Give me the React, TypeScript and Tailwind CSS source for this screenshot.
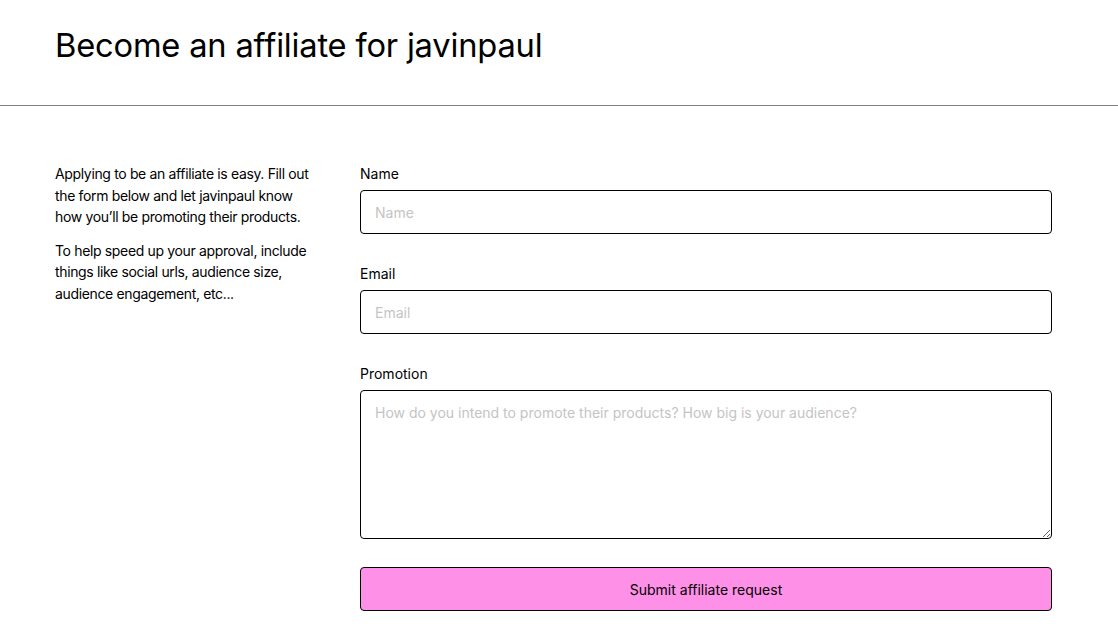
export default function App() {
  return (
    <div className="min-h-screen bg-white text-black" style={{ fontFamily: "Inter, 'Noto Sans', sans-serif" }}>
      <header className="h-[106px] border-b border-[#808080] px-[55px] flex items-center">
        <h1 className="text-[32.7px] leading-none tracking-[-0.2px] pb-[14px]">Become an affiliate for javinpaul</h1>
      </header>
      <main className="flex pl-[55px] pt-[57px]">
        <div className="w-[305px] shrink-0 text-[14px] leading-[21.5px] tracking-[-0.35px]">
          <p className="mb-[12px]">
            Applying to be an affiliate is easy. Fill out
            <br />
            the form below and let javinpaul know
            <br />
            how you’ll be promoting their products.
          </p>
          <p>
            To help speed up your approval, include
            <br />
            things like social urls, audience size,
            <br />
            audience engagement, etc...
          </p>
        </div>
        <form className="w-[692px] flex flex-col gap-[29px]" onSubmit={(e) => e.preventDefault()}>
          <div className="flex flex-col gap-[6px]">
            <label className="text-[14px] leading-[21px]">Name</label>
            <input
              placeholder="Name"
              className="h-[44px] rounded-[4px] border border-black px-[14px] text-[14px] placeholder:text-[#c4c4c4] outline-none"
            />
          </div>
          <div className="flex flex-col gap-[6px]">
            <label className="text-[14px] leading-[21px]">Email</label>
            <input
              placeholder="Email"
              className="h-[44px] rounded-[4px] border border-black px-[14px] text-[14px] placeholder:text-[#c4c4c4] outline-none"
            />
          </div>
          <div className="flex flex-col gap-[6px]">
            <label className="text-[14px] leading-[21px]">Promotion</label>
            <textarea
              placeholder="How do you intend to promote their products? How big is your audience?"
              className="h-[149px] rounded-[4px] border border-black px-[14px] py-[12px] text-[14px] leading-[20px] placeholder:text-[#c4c4c4] outline-none"
            />
          </div>
          <button type="submit" className="-mt-[1px] h-[44px] rounded-[4px] border border-black bg-[#ff90e8] text-[14px]">
            Submit affiliate request
          </button>
        </form>
      </main>
    </div>
  );
}
